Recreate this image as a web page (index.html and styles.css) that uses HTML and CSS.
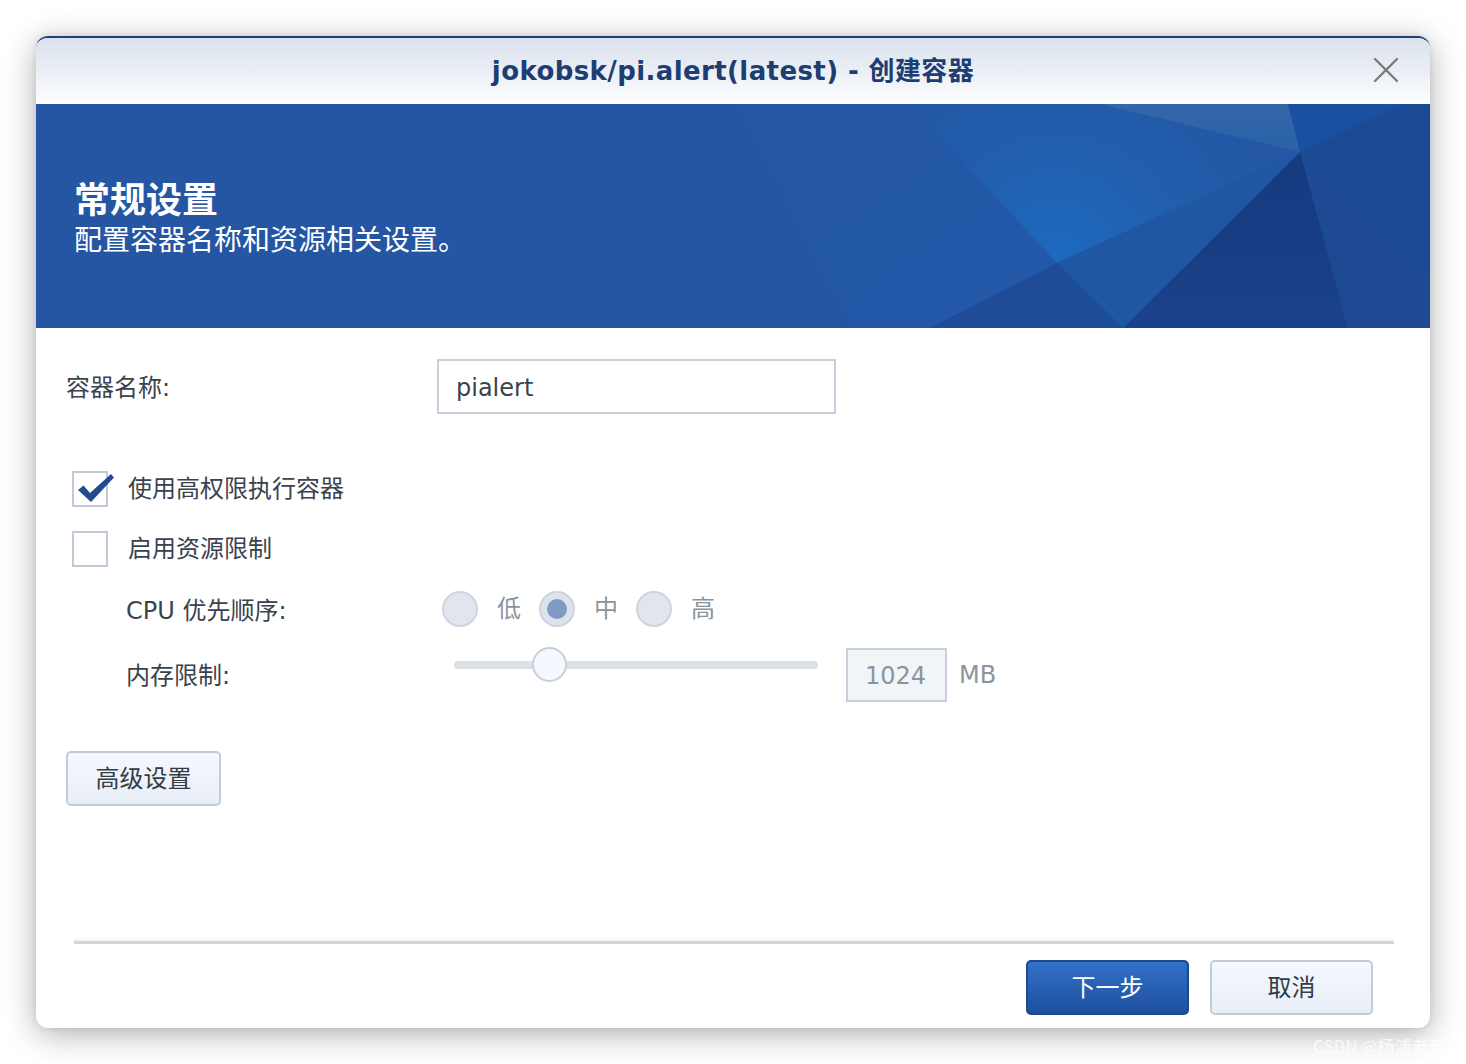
FILE: index.html
```html
<!DOCTYPE html>
<html lang="zh-CN">
<head>
<meta charset="utf-8">
<title>创建容器</title>
<link rel="stylesheet" href="styles.css">
</head>
<body>
<div class="page">
  <div class="dialog">
    <div class="titlebar">
      <span class="tb-spacer"></span>
      <div class="title">jokobsk/pi.alert(latest) - 创建容器</div>
      <div class="close">
        <svg width="26" height="26" viewBox="0 0 26 26"><path d="M2 2 L24 24 M24 2 L2 24" stroke="#7b7b7b" stroke-width="2.4" stroke-linecap="round" fill="none"/></svg>
      </div>
    </div>
    <div class="banner">
      <svg class="banner-art" viewBox="0 0 1394 224" preserveAspectRatio="none" width="1394" height="224">
        <defs>
          <radialGradient id="glow" cx="1021" cy="159" r="240" gradientUnits="userSpaceOnUse">
            <stop offset="0" stop-color="#1d6ac0"/>
            <stop offset="0.5" stop-color="#215eac"/>
            <stop offset="1" stop-color="#2457a5"/>
          </radialGradient>
          <linearGradient id="band" x1="0" y1="0" x2="0" y2="1">
            <stop offset="0" stop-color="#3467a8"/>
            <stop offset="1" stop-color="#2a62a8"/>
          </linearGradient>
          <linearGradient id="dark" x1="0" y1="0" x2="0" y2="1">
            <stop offset="0" stop-color="#143a80"/>
            <stop offset="1" stop-color="#1b428a"/>
          </linearGradient>
          <linearGradient id="p2" x1="0" y1="0" x2="1" y2="1">
            <stop offset="0" stop-color="#2457a5"/>
            <stop offset="1" stop-color="#2259a8"/>
          </linearGradient>
        </defs>
        <rect x="0" y="0" width="1394" height="224" fill="#2456a4"/>
        <polygon points="702,0 874,0 1021,159 894,224 817,224" fill="url(#p2)"/>
        <polygon points="874,0 1064,0 1264,48 1021,159" fill="url(#glow)"/>
        <polygon points="1064,0 1252,0 1264,48" fill="url(#band)"/>
        <polygon points="1252,0 1367,0 1264,48" fill="#1a50a1"/>
        <polygon points="1367,0 1394,0 1394,173 1264,48" fill="#1b4993"/>
        <polygon points="1264,48 1394,173 1394,224 1312,224" fill="#1d4a93"/>
        <polygon points="1264,48 1312,224 1087,224" fill="url(#dark)"/>
        <polygon points="1264,48 1087,224 1021,159" fill="#1f57a3"/>
        <polygon points="1021,159 1087,224 894,224" fill="#1f4c97"/>
      </svg>
      <div class="banner-text">
        <div class="banner-title">常规设置</div>
        <div class="banner-sub">配置容器名称和资源相关设置。</div>
      </div>
    </div>
    <div class="content">
      <div class="name-row">
        <div class="label">容器名称:</div>
        <div class="text-input">pialert</div>
      </div>
      <div class="check-row first">
        <span class="checkbox">
          <svg width="44" height="40" viewBox="0 0 44 40"><path d="M4 19 L9.5 14.5 L16 22 L37 3 L40 6.5 L17 31 Z" fill="#234a8d"/></svg>
        </span>
        <span class="check-label">使用高权限执行容器</span>
      </div>
      <div class="check-row second">
        <span class="checkbox"></span>
        <span class="check-label">启用资源限制</span>
      </div>
      <div class="sub-row cpu-row">
        <div class="sub-label">CPU 优先顺序:</div>
        <div class="radios">
          <span class="radio"></span><span class="radio-label">低</span>
          <span class="radio selected"><span class="dot"></span></span><span class="radio-label">中</span>
          <span class="radio"></span><span class="radio-label">高</span>
        </div>
      </div>
      <div class="sub-row mem-row">
        <div class="sub-label cjk">内存限制:</div>
        <div class="slider">
          <div class="track"><span class="thumb"></span></div>
        </div>
        <div class="num-input">1024</div>
        <div class="unit">MB</div>
      </div>
      <div class="adv-row">
        <button class="btn">高级设置</button>
      </div>
    </div>
    <div class="footer">
      <div class="sep"></div>
      <div class="actions">
        <button class="btn primary">下一步</button>
        <button class="btn">取消</button>
      </div>
    </div>
  </div>
  <div class="watermark">CSDN @杨浦老苏</div>
</div>
</body>
</html>
```
FILE: styles.css
```css
* { box-sizing: border-box; }
html, body { margin: 0; padding: 0; background: #ffffff; }
body {
  font-family: "DejaVu Sans", "Noto Sans CJK SC", sans-serif;
  color: #3a424d;
}
.page {
  position: relative;
  width: 1466px;
  height: 1064px;
  padding: 36px;
  overflow: hidden;
}
.dialog {
  width: 1394px;
  height: 992px;
  border-radius: 12px;
  border-top: 2px solid #213f77;
  background: #ffffff;
  overflow: hidden;
  display: flex;
  flex-direction: column;
  box-shadow: 0 6px 32px rgba(0, 0, 0, 0.32), 0 0 6px rgba(0, 0, 0, 0.08);
}
.titlebar {
  height: 66px;
  flex: none;
  display: grid;
  grid-template-columns: 1fr auto 1fr;
  align-items: center;
  background: linear-gradient(to bottom, #dbe2ed 0%, #e9edf4 45%, #fdfeff 100%);
}
.title {
  font-size: 26px;
  letter-spacing: 0.4px;
  font-weight: bold;
  color: #1e3d72;
  line-height: 32px;
  white-space: nowrap;
  margin-top: -1px;
}
.close {
  justify-self: end;
  margin-right: 31px;
  width: 26px;
  height: 26px;
  margin-top: -3px;
}
.close svg { display: block; }
.banner {
  height: 224px;
  flex: none;
  display: grid;
  background: #2456a4;
}
.banner-art, .banner-text { grid-area: 1 / 1; }
.banner-art { display: block; }
.banner-text {
  padding: 72px 0 0 38px;
  color: #ffffff;
  font-family: "Noto Sans CJK SC", sans-serif;
}
.banner-title {
  font-size: 36px;
  font-weight: bold;
  line-height: 42px;
  margin-bottom: 3px;
}
.banner-sub {
  font-size: 28px;
  line-height: 34px;
}
.content {
  flex: 1;
  padding: 31px 0 0 30px;
  display: flex;
  flex-direction: column;
  font-size: 24px;
}
.name-row {
  display: flex;
  align-items: center;
  height: 55px;
}
.label { width: 371px; padding-bottom: 3px; }
.text-input {
  width: 399px;
  height: 55px;
  border: 2px solid #c6cfdb;
  background: #ffffff;
  padding-left: 17px;
  line-height: 54px;
  color: #3a424d;
}
.check-row {
  display: flex;
  align-items: center;
  height: 36px;
  margin-left: 6px;
}
.check-row.first { margin-top: 57px; }
.check-row.second { margin-top: 24px; }
.check-label { padding-bottom: 5px; }
.checkbox {
  width: 36px;
  height: 36px;
  border: 2px solid #c1cad7;
  background: #ffffff;
  position: relative;
  flex: none;
  margin-right: 20px;
}
.checkbox svg {
  position: absolute;
  left: 0;
  top: -2px;
}
.sub-row {
  display: flex;
  align-items: center;
  padding-left: 60px;
}
.sub-label { width: 316px; flex: none; padding-bottom: 1px; }
.sub-label.cjk { padding-bottom: 4px; }
.cpu-row { height: 36px; margin-top: 24px; }
.radios { display: flex; align-items: center; }
.radio {
  width: 36px;
  height: 36px;
  border-radius: 50%;
  border: 2px solid #cbd4df;
  background: #e1e6ee;
  display: flex;
  align-items: center;
  justify-content: center;
  flex: none;
}
.radio.selected { background: #dde3ec; }
.radio .dot {
  width: 20px;
  height: 20px;
  border-radius: 50%;
  background: #7f9bc4;
}
.radio-label {
  color: #8a94a0;
  margin: 0 18px 0 19px;
  line-height: 36px;
}
.mem-row { height: 54px; margin-top: 21px; }
.slider {
  width: 388px;
  padding: 0 12px;
  margin-bottom: 20px;
}
.track {
  position: relative;
  height: 8px;
  border-radius: 4px;
  background: #dce1e7;
}
.thumb {
  position: absolute;
  left: 78px;
  top: -14px;
  width: 35px;
  height: 35px;
  border-radius: 50%;
  border: 2px solid #c5cfdb;
  background: #f5f9ff;
}
.num-input {
  width: 101px;
  height: 54px;
  margin-left: 16px;
  border: 2px solid #c6cfdb;
  background: #f2f5f8;
  padding-left: 17px;
  line-height: 52px;
  color: #8a94a0;
}
.unit {
  margin-left: 12px;
  color: #8a94a0;
}
.adv-row { margin-top: 49px; }
.btn {
  font-family: "Noto Sans CJK SC", sans-serif;
  font-size: 24px;
  color: #343c47;
  width: 155px;
  height: 55px;
  border: 2px solid #c2ccd8;
  border-radius: 5px;
  background: linear-gradient(to bottom, #f5f8fe 0%, #e8eef7 100%);
  padding: 0 0 3px 0;
  line-height: 48px;
  cursor: pointer;
}
.footer {
  flex: none;
  display: flex;
  flex-direction: column;
}
.sep {
  height: 7px;
  margin: 0 36px 0 38px;
  background: linear-gradient(to bottom, rgba(0,0,0,0) 0px, rgba(0,0,0,0.05) 4px, #d4d4d4 4px, #d4d4d4 7px);
}
.actions {
  display: flex;
  justify-content: flex-end;
  gap: 21px;
  padding: 16px 57px 13px 0;
}
.actions .btn { width: 163px; }
.btn.primary {
  color: #ffffff;
  border-color: #1c498f;
  background: linear-gradient(to bottom, #3171c9 0%, #1f4f9e 100%);
}
.watermark {
  position: absolute;
  left: 1313px;
  top: 1033px;
  font-family: "Noto Sans CJK SC", sans-serif;
  font-size: 17px;
  color: rgba(255, 255, 255, 0.8);
  white-space: nowrap;
}
```
